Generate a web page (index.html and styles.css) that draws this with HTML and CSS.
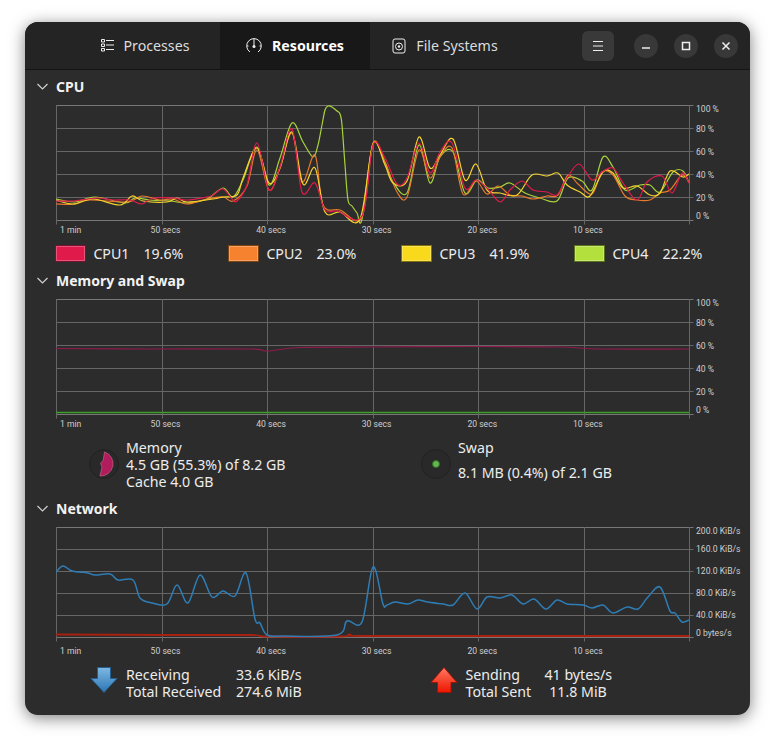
FILE: index.html
```html
<!DOCTYPE html>
<html lang="en">

<head>
    <meta charset="UTF-8">
    <title>System Monitor</title>
    <link rel="stylesheet" href="styles.css">
</head>

<body>
    <div class="window">
        <header class="topbar">
            <nav class="tabs">
                <div class="tab">
                    <svg class="tab-icon" width="13" height="13" viewBox="0 0 13 13">
                        <path class="icon-line" d="M5 1.5h8M5 6h8M5 10.5h8" />
                        <path class="icon-line" d="M.5 .5h3v2.500h-3zM.5 5h3v2.500h-3zM.5 9.500h3v2.500h-3z" />
                    </svg>
                    <span>Processes</span>
                </div>
                <div class="tab tab-active">
                    <svg class="tab-icon" width="16" height="16" viewBox="0 0 16 16">
                        <path class="icon-line" d="M4 14A7.3 7.3 0 1 1 12 14" />
                        <path class="icon-line" d="M8 1v7" />
                        <circle class="icon-fill" cx="8" cy="8.5" r="1.5" />
                        <path class="icon-line" d="M1 8h1.5M13.5 8H15" />
                    </svg>
                    <span>Resources</span>
                </div>
                <div class="tab">
                    <svg class="tab-icon" width="14" height="16" viewBox="0 0 14 16">
                        <rect class="icon-line" x="1" y="1" width="12" height="14" rx="2" />
                        <circle class="icon-line" cx="7" cy="8.5" r="3.5" />
                        <circle class="icon-fill" cx="7" cy="8.5" r="1.2" />
                    </svg>
                    <span>File Systems</span>
                </div>
            </nav>
            <div class="controls">
                <button class="menu-button" type="button">
                    <svg width="10" height="10" viewBox="0 0 10 10">
                        <path class="icon-line" d="M0 .5h10M0 5h10M0 9.5h10" />
                    </svg>
                </button>
                <button class="window-button" type="button">
                    <svg width="10" height="10" viewBox="0 0 10 10">
                        <path class="icon-line icon-bold" d="M1 7h8" />
                    </svg>
                </button>
                <button class="window-button" type="button">
                    <svg width="10" height="10" viewBox="0 0 10 10">
                        <rect class="icon-line icon-bold" x="1.5" y="1.5" width="7" height="7" />
                    </svg>
                </button>
                <button class="window-button" type="button">
                    <svg width="10" height="10" viewBox="0 0 10 10">
                        <path class="icon-line icon-bold" d="M1.5 1.5l7 7M8.5 1.5l-7 7" />
                    </svg>
                </button>
            </div>
        </header>

        <main class="content">
            <section class="group">
                <h2 class="group-title">
                    <svg class="chevron" width="11" height="7" viewBox="0 0 11 7">
                        <path d="M.5 1l5 5 5-5" />
                    </svg>
                    CPU
                </h2>
                <div class="graph">
                    <svg class="plot" id="cpu-plot"></svg>
                    <div class="y-axis">
                        <span>100 %</span>
                        <span>80 %</span>
                        <span>60 %</span>
                        <span>40 %</span>
                        <span>20 %</span>
                        <span>0 %</span>
                    </div>
                </div>
                <div class="x-axis">
                    <span>1 min</span>
                    <span>50 secs</span>
                    <span>40 secs</span>
                    <span>30 secs</span>
                    <span>20 secs</span>
                    <span>10 secs</span>
                </div>
                <ul class="legend">
                    <li><i class="swatch swatch-cpu1"></i><span class="legend-name">CPU1</span><span>19.6%</span></li>
                    <li><i class="swatch swatch-cpu2"></i><span class="legend-name">CPU2</span><span>23.0%</span></li>
                    <li><i class="swatch swatch-cpu3"></i><span class="legend-name">CPU3</span><span>41.9%</span></li>
                    <li><i class="swatch swatch-cpu4"></i><span class="legend-name">CPU4</span><span>22.2%</span></li>
                </ul>
            </section>

            <section class="group">
                <h2 class="group-title">
                    <svg class="chevron" width="11" height="7" viewBox="0 0 11 7">
                        <path d="M.5 1l5 5 5-5" />
                    </svg>
                    Memory and Swap
                </h2>
                <div class="graph">
                    <svg class="plot" id="mem-plot"></svg>
                    <div class="y-axis">
                        <span>100 %</span>
                        <span>80 %</span>
                        <span>60 %</span>
                        <span>40 %</span>
                        <span>20 %</span>
                        <span>0 %</span>
                    </div>
                </div>
                <div class="x-axis">
                    <span>1 min</span>
                    <span>50 secs</span>
                    <span>40 secs</span>
                    <span>30 secs</span>
                    <span>20 secs</span>
                    <span>10 secs</span>
                </div>
                <div class="info-row">
                    <div class="info">
                        <svg class="info-icon" width="30" height="30" viewBox="0 0 30 30">
                            <circle class="gauge-track" cx="15" cy="15" r="14.5" />
                            <path class="gauge-mem" d="M15.5 3A12.3 12.3 0 0 1 11 27L13 18 11.6 14.3 14.3 11Z" />
                        </svg>
                        <div>
                            <div>Memory</div>
                            <div>4.5 GB (55.3%) of 8.2 GB</div>
                            <div>Cache 4.0 GB</div>
                        </div>
                    </div>
                    <div class="info">
                        <svg class="info-icon" width="30" height="30" viewBox="0 0 30 30">
                            <circle class="gauge-track" cx="15" cy="15" r="14.5" />
                            <circle class="gauge-swap" cx="15" cy="15" r="3.5" />
                        </svg>
                        <div class="swap-text">
                            <div>Swap</div>
                            <div>8.1 MB (0.4%) of 2.1 GB</div>
                        </div>
                    </div>
                </div>
            </section>

            <section class="group">
                <h2 class="group-title">
                    <svg class="chevron" width="11" height="7" viewBox="0 0 11 7">
                        <path d="M.5 1l5 5 5-5" />
                    </svg>
                    Network
                </h2>
                <div class="graph graph-net">
                    <svg class="plot" id="net-plot"></svg>
                    <div class="y-axis">
                        <span>200.0 KiB/s</span>
                        <span>160.0 KiB/s</span>
                        <span>120.0 KiB/s</span>
                        <span>80.0 KiB/s</span>
                        <span>40.0 KiB/s</span>
                        <span>0 bytes/s</span>
                    </div>
                </div>
                <div class="x-axis x-axis-net">
                    <span>1 min</span>
                    <span>50 secs</span>
                    <span>40 secs</span>
                    <span>30 secs</span>
                    <span>20 secs</span>
                    <span>10 secs</span>
                </div>
                <div class="info-row info-row-net">
                    <div class="info">
                        <svg class="info-icon arrow-icon" width="30" height="28" viewBox="0 0 30 28">
                            <defs>
                                <linearGradient id="blue-arrow" x1="0" y1="0" x2="0" y2="1">
                                    <stop offset="0" stop-color="#7db8e4" />
                                    <stop offset="1" stop-color="#2c75b3" />
                                </linearGradient>
                            </defs>
                            <path class="arrow-down" d="M8.5 1.5h13v11h6.5L15 26.5 2 12.5h6.5z" />
                        </svg>
                        <div class="net-stats net-stats-in">
                            <span>Receiving</span><span class="net-value">33.6 KiB/s</span>
                            <span>Total Received</span><span class="net-value">274.6 MiB</span>
                        </div>
                    </div>
                    <div class="info">
                        <svg class="info-icon arrow-icon" width="30" height="28" viewBox="0 0 30 28">
                            <defs>
                                <linearGradient id="red-arrow" x1="0" y1="0" x2="0" y2="1">
                                    <stop offset="0" stop-color="#ff7a62" />
                                    <stop offset="1" stop-color="#ee1400" />
                                </linearGradient>
                            </defs>
                            <path class="arrow-up" d="M15 1.5L28 16.5h-6v10H8.5v-10H2z" />
                        </svg>
                        <div class="net-stats net-stats-out">
                            <span>Sending</span><span class="net-value">41 bytes/s</span>
                            <span>Total Sent</span><span class="net-value">11.8 MiB</span>
                        </div>
                    </div>
                </div>
            </section>
        </main>
    </div>
    <script src="graphs.js"></script>
</body>

</html>
```

FILE: styles.css
```css
* {
    margin: 0;
    padding: 0;
    box-sizing: border-box;
}

body {
    background: #fff;
    padding: 22px 25px;
    font-family: "Noto Sans", sans-serif;
    font-size: 14.2px;
    line-height: 17px;
    color: #ececec;
}

.window {
    width: 725px;
    height: 693px;
    background: #2c2c2c;
    border-radius: 13px;
    box-shadow: 0 3px 16px rgba(0, 0, 0, .5);
    overflow: hidden;
}

/* top bar */
.topbar {
    display: flex;
    height: 48px;
    background: #242424;
    border-bottom: 1px solid #141414;
}

.tabs {
    display: flex;
    margin-left: 45px;
}

.tab {
    display: flex;
    align-items: center;
    justify-content: center;
    gap: 10px;
    width: 150px;
    color: #dcdcdc;
}

.tab-active {
    background: #181818;
    color: #fff;
    font-weight: 700;
}

.icon-line {
    fill: none;
    stroke: #eee;
    stroke-width: 1;
}

.icon-bold {
    stroke-width: 1.5;
}

.icon-fill {
    fill: #eee;
}

.controls {
    display: flex;
    align-items: center;
    gap: 16px;
    margin-left: auto;
    margin-right: 12px;
}

.menu-button {
    display: flex;
    align-items: center;
    justify-content: center;
    width: 34px;
    height: 32px;
    margin-right: 3px;
    background: #393939;
    border: 1px solid #232323;
    border-radius: 7px;
}

.window-button {
    display: flex;
    align-items: center;
    justify-content: center;
    width: 24px;
    height: 24px;
    background: #383838;
    border: 0;
    border-radius: 50%;
}

/* sections */
.content {
    padding: 6px 0 0 12px;
}

.group-title {
    display: flex;
    align-items: center;
    gap: 8px;
    height: 20px;
    margin-bottom: 9px;
    font-size: 14px;
    font-weight: 700;
    color: #f2f2f2;
}

.chevron path {
    fill: none;
    stroke: #d0d0d0;
    stroke-width: 1.2;
}

/* graphs */
.graph {
    display: flex;
    margin-left: 19px;
}

.plot {
    display: block;
    width: 640px;
    height: 120px;
    flex: none;
}

.graph-net .plot {
    height: 115px;
}

.grid-line {
    stroke: #666;
    stroke-width: 1;
}

.grid-edge {
    stroke: #777;
}

.trace {
    fill: none;
    stroke-width: 1.2;
    stroke-linejoin: round;
}

.trace-cpu1 { stroke: #e01b4c; }
.trace-cpu2 { stroke: #e87a2a; }
.trace-cpu3 { stroke: #f6d32d; }
.trace-cpu4 { stroke: #a8d43a; }
.trace-mem { stroke: #8f1a4c; }
.trace-swap { stroke: #3f9e2a; stroke-width: 1.5; }
.trace-in { stroke: #2f7db5; stroke-width: 1.5; }
.trace-out { stroke: #a8200f; stroke-width: 2; }

.y-axis {
    display: grid;
    grid-template-rows: 14px repeat(4, 23px) 13px;
    height: 119px;
    margin-top: -2px;
    font-family: Roboto, sans-serif;
    font-size: 8.6px;
    line-height: 12px;
    white-space: nowrap;
    color: #cfcfcf;
}

.y-axis span {
    align-self: center;
}

.y-axis span:first-child {
    align-self: start;
}

.graph-net .y-axis {
    grid-template-rows: 13px repeat(4, 22px) 13px;
}

.x-axis {
    display: grid;
    grid-template-columns: repeat(6, 105.6px);
    margin: -2px 0 0 8px;
    height: 14px;
    font-family: Roboto, sans-serif;
    font-size: 8.6px;
    line-height: 14px;
    white-space: nowrap;
    color: #cfcfcf;
}

.x-axis span:first-child {
    margin-left: 15px;
}

.x-axis-net {
    margin-top: 0;
}

/* legend under the cpu graph */
.legend {
    display: grid;
    grid-template-columns: repeat(4, 173px);
    margin: 8px 0 8px 18.4px;
    list-style: none;
}

.legend li {
    display: flex;
    align-items: center;
    height: 17px;
}

.legend-name {
    width: 50px;
}

.swatch {
    width: 31px;
    height: 17px;
    margin-right: 7px;
    border: 1px solid;
    box-shadow: inset 0 0 0 1px rgba(255, 255, 255, .25);
}

.swatch-cpu1 { background: #e01b4c; border-color: #7a1030; }
.swatch-cpu2 { background: #f6822f; border-color: #7d4414; }
.swatch-cpu3 { background: #f8d91c; border-color: #80700e; }
.swatch-cpu4 { background: #b4e03e; border-color: #5c7220; }

/* memory and network details */
.info-row {
    display: grid;
    grid-template-columns: 332px 1fr;
    margin: 8px 0 8px 52px;
}

.info-row-net {
    grid-template-columns: 339.5px 1fr;
}

.info {
    display: flex;
    gap: 7px;
}

.info-icon {
    flex: none;
    margin-top: 10px;
}

.arrow-icon {
    margin-top: 0;
}

.swap-text {
    display: flex;
    flex-direction: column;
    gap: 8px;
}

.gauge-track {
    fill: #292929;
    stroke: #222;
}

.gauge-mem {
    fill: #b01c5c;
    stroke: #c9708f;
    stroke-width: .6;
}

.gauge-swap {
    fill: #62b84f;
    stroke: #2f6e24;
}

.arrow-down {
    fill: url(#blue-arrow);
    stroke: #265f8e;
    stroke-linejoin: round;
}

.arrow-up {
    fill: url(#red-arrow);
    stroke: #9c1508;
    stroke-linejoin: round;
}

.net-stats {
    display: grid;
}

.net-stats-in {
    grid-template-columns: 110px 65px;
}

.net-stats-out {
    grid-template-columns: 79px 67px;
}

.net-value {
    text-align: center;
    white-space: nowrap;
}
```

FILE: graphs.js
```js
// points are [x, y] as measured on the 775x743 window, the plot origin gets subtracted
var vertical = [56, 162, 267, 373, 478, 584, 689];

var cpu1 = [[56,201],[73,201],[97,198],[113,200],[130,200],[142,204],[153,198],[173,198],[187,200],[207,197],[213,195],[223,189],[232,199],[237,201],[247,185],[257,143],[269,190],[280,167],[292,129],[302,192],[315,183],[325,210],[337,211],[362,216],[373,145],[385,158],[397,184],[407,178],[419,143],[430,173],[440,152],[452,143],[465,188],[476,180],[487,188],[500,202],[510,190],[522,181],[533,190],[547,192],[557,195],[567,178],[579,164],[592,180],[602,172],[613,168],[623,183],[637,200],[647,182],[662,176],[672,193],[682,173],[689,183]];

var cpu2 = [[56,204],[75,204],[90,200],[127,202],[142,196],[160,200],[173,199],[187,204],[207,199],[223,197],[233,201],[247,186],[257,150],[269,190],[280,168],[292,133],[302,182],[315,155],[323,205],[340,210],[362,217],[373,143],[385,163],[397,192],[407,197],[419,150],[430,178],[440,157],[452,148],[463,194],[476,181],[487,194],[498,186],[510,195],[522,196],[533,199],[547,196],[558,195],[568,175],[578,184],[592,194],[602,172],[613,175],[625,196],[637,200],[650,200],[660,193],[670,190],[682,175],[689,182]];

var cpu3 = [[56,200],[73,204],[93,199],[120,205],[132,196],[143,201],[167,202],[177,198],[187,202],[213,199],[223,197],[237,195],[243,178],[257,148],[269,183],[280,168],[292,132],[303,184],[315,168],[325,212],[340,212],[360,219],[373,144],[385,165],[393,183],[407,181],[419,137],[430,168],[440,155],[453,139],[465,180],[476,164],[487,190],[500,193],[517,195],[532,175],[547,176],[558,173],[567,185],[580,192],[590,196],[603,172],[613,173],[623,188],[637,186],[650,195],[660,193],[670,171],[683,177],[689,174]];

var cpu4 = [[56,199],[75,202],[95,197],[125,203],[135,198],[150,200],[170,201],[187,203],[207,199],[223,188],[233,197],[243,180],[257,147],[269,185],[280,158],[292,123],[303,142],[313,157],[318,145],[322,125],[325,110],[328,106],[332,107],[337,111],[340,114],[342,125],[345,165],[348,200],[352,206],[357,213],[362,219],[373,144],[385,162],[393,182],[407,193],[419,145],[430,183],[440,157],[453,152],[465,193],[477,180],[488,188],[500,187],[510,183],[525,193],[540,198],[557,201],[568,178],[582,181],[592,190],[603,157],[613,167],[625,190],[640,185],[650,185],[660,192],[673,172],[683,171],[689,183]];

var mem = [[56,348.5],[150,349],[250,349],[267,351],[300,347.5],[370,347],[480,346.5],[560,347],[600,349],[689,349]];
var swap = [[56,412.5],[689,412.5]];

var netIn = [[56,572],[63,566],[72,571],[88,573],[95,575],[110,574],[118,580],[133,580],[140,598],[152,603],[167,604],[177,585],[188,603],[200,575],[212,597],[223,591],[235,596],[246,573],[255,619],[260,623],[267,635],[283,636],[337,635],[347,621],[362,622],[373,567],[383,604],[387,605],[395,602],[408,604],[418,600],[428,602],[443,604],[453,605],[465,593],[477,609],[487,597],[500,598],[512,595],[523,604],[534,599],[546,609],[557,600],[567,604],[583,605],[592,608],[603,605],[613,613],[627,607],[638,609],[648,597],[660,587],[670,611],[675,613],[682,622],[689,620]];
var netOut = [[56,634.5],[160,635],[250,635],[267,636.5],[340,636.5],[350,634.5],[360,636],[480,636],[689,636]];

// catmull-rom through the points, gives the smooth look of the real graph
function smoothPath(points, left, top) {
    var d = 'M' + (points[0][0] - left) + ' ' + (points[0][1] - top);
    for (var i = 0; i < points.length - 1; i++) {
        var p0 = points[Math.max(i - 1, 0)];
        var p1 = points[i];
        var p2 = points[i + 1];
        var p3 = points[Math.min(i + 2, points.length - 1)];
        d += 'C' + (p1[0] + (p2[0] - p0[0]) / 6 - left).toFixed(1) + ' ' + (p1[1] + (p2[1] - p0[1]) / 6 - top).toFixed(1);
        d += ' ' + (p2[0] - (p3[0] - p1[0]) / 6 - left).toFixed(1) + ' ' + (p2[1] - (p3[1] - p1[1]) / 6 - top).toFixed(1);
        d += ' ' + (p2[0] - left) + ' ' + (p2[1] - top);
    }
    return d;
}

function addLine(svg, x1, y1, x2, y2, className) {
    var line = document.createElementNS('http://www.w3.org/2000/svg', 'line');
    line.setAttribute('x1', x1);
    line.setAttribute('y1', y1);
    line.setAttribute('x2', x2);
    line.setAttribute('y2', y2);
    line.setAttribute('class', className);
    svg.appendChild(line);
}

function drawPlot(id, top, step, traces) {
    var svg = document.getElementById(id);
    var left = vertical[0];
    var right = vertical[vertical.length - 1] - left + 0.5;
    var bottom = step * 5 + 0.5;

    for (var i = 0; i <= 5; i++) {
        var y = step * i + 0.5;
        addLine(svg, 0, y, right + 4, y, i === 0 || i === 5 ? 'grid-line grid-edge' : 'grid-line');
    }
    vertical.forEach(function(x) {
        var vx = x - left + 0.5;
        addLine(svg, vx, 0, vx, bottom + 4, 'grid-line');
    });

    traces.forEach(function(trace) {
        var path = document.createElementNS('http://www.w3.org/2000/svg', 'path');
        path.setAttribute('d', smoothPath(trace.points, left, top));
        path.setAttribute('class', 'trace ' + trace.name);
        svg.appendChild(path);
    });
}

drawPlot('cpu-plot', 105, 23, [
    { name: 'trace-cpu4', points: cpu4 },
    { name: 'trace-cpu2', points: cpu2 },
    { name: 'trace-cpu3', points: cpu3 },
    { name: 'trace-cpu1', points: cpu1 }
]);

drawPlot('mem-plot', 299, 23, [
    { name: 'trace-mem', points: mem },
    { name: 'trace-swap', points: swap }
]);

drawPlot('net-plot', 527, 22, [
    { name: 'trace-out', points: netOut },
    { name: 'trace-in', points: netIn }
]);
```
